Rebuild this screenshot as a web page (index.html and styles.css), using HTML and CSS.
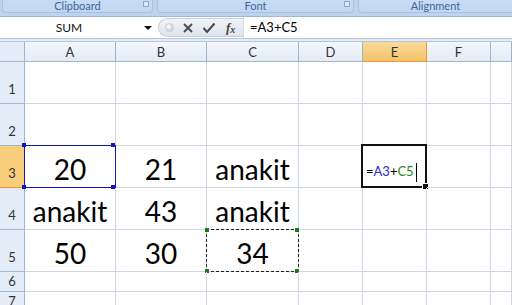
FILE: index.html
```html
<!DOCTYPE HTML>
<html lang="en">
<head>
<meta charset="UTF-8">
<title>Book1</title>
<link rel="stylesheet" href="styles.css">
</head>
<body>
  <div class="ribbon">
    <div class="group g1"><span class="glabel">Clipboard</span><span class="launch"></span></div>
    <div class="group g2"><span class="glabel">Font</span><span class="launch"></span></div>
    <div class="group g3"><span class="glabel">Alignment</span></div>
  </div>

  <div class="fbar">
    <div class="namebox"><span class="name">SUM</span><span class="drop"></span></div>
    <div class="fbtns">
      <span class="dot"></span>
      <svg class="ico" width="12" height="12" viewBox="0 0 12 12"><path d="M2 2 L10 10 M10 2 L2 10" stroke="#4a4a4a" stroke-width="1.8" fill="none"/></svg>
      <svg class="ico" width="14" height="12" viewBox="0 0 14 12"><path d="M1.5 6 L5 10 L12.5 1.5" stroke="#4a4a4a" stroke-width="2" fill="none"/></svg>
      <span class="fx">f<sub>x</sub></span>
    </div>
    <div class="finput">=A3+C5</div>
  </div>
  <div class="fsep"></div>

  <div class="sheet">
    <div class="hd corner"></div>
    <div class="hd col">A</div>
    <div class="hd col">B</div>
    <div class="hd col">C</div>
    <div class="hd col">D</div>
    <div class="hd col on">E</div>
    <div class="hd col">F</div>
    <div class="hd col"></div>

    <div class="hd row">1</div>
    <div class="c"></div><div class="c"></div><div class="c"></div><div class="c"></div><div class="c"></div><div class="c"></div><div class="c"></div>

    <div class="hd row">2</div>
    <div class="c"></div><div class="c"></div><div class="c"></div><div class="c"></div><div class="c"></div><div class="c"></div><div class="c"></div>

    <div class="hd row on">3</div>
    <div class="c ref">20</div><div class="c">21</div><div class="c">anakit</div><div class="c"></div>
    <div class="c edit"><span class="eq">=</span><span class="r1">A3</span><span class="eq">+</span><span class="r2">C5</span><span class="caret"></span></div>
    <div class="c"></div><div class="c"></div>

    <div class="hd row">4</div>
    <div class="c">anakit</div><div class="c">43</div><div class="c">anakit</div><div class="c"></div><div class="c"></div><div class="c"></div><div class="c"></div>

    <div class="hd row">5</div>
    <div class="c">50</div><div class="c">30</div><div class="c ants">34</div><div class="c"></div><div class="c"></div><div class="c"></div><div class="c"></div>

    <div class="hd row small">6</div>
    <div class="c"></div><div class="c"></div><div class="c"></div><div class="c"></div><div class="c"></div><div class="c"></div><div class="c"></div>

    <div class="hd row small">7</div>
    <div class="c"></div><div class="c"></div><div class="c"></div><div class="c"></div><div class="c"></div><div class="c"></div><div class="c"></div>
  </div>
</body>
</html>
```

FILE: styles.css
```css
* { margin: 0; padding: 0; box-sizing: border-box; }
html, body { width: 512px; height: 305px; overflow: hidden; background: #fff; }
body { font-family: Lato, "Liberation Sans", sans-serif; }

/* ribbon group captions */
.ribbon {
  display: flex;
  gap: 4px;
  height: 17px;
  padding: 0 0 0 2px;
  background: #bdd3ee;
  border-bottom: 1px solid #9fb8d9;
}
.group {
  position: relative;
  height: 13px;
  background: linear-gradient(#c7dbf3, #c2d7f1);
  border: 1px solid #a9c2e2;
  border-top: none;
  border-radius: 0 0 4px 4px;
  text-align: center;
}
.g1 { width: 151px; }
.g2 { width: 197px; }
.g3 { flex: 1; border-right: none; border-radius: 0 0 0 4px; }
.glabel {
  display: block;
  font-size: 11px;
  line-height: 11px;
  color: #3f65a0;
}
.launch {
  position: absolute;
  right: 3px;
  top: 1px;
  width: 6px;
  height: 6px;
  border: 1px solid #8fa7c8;
  background: #dce8f6;
}

/* formula bar */
.fbar {
  display: flex;
  height: 22px;
  background: #fff;
  border-bottom: 1px solid #b9c9df;
}
.namebox {
  position: relative;
  width: 158px;
  display: flex;
  align-items: center;
  justify-content: center;
  font-size: 12px;
  color: #111;
}
.name { margin-left: -20px; }
.drop {
  position: absolute;
  right: 6px;
  top: 9px;
  border-left: 4px solid transparent;
  border-right: 4px solid transparent;
  border-top: 4px solid #111;
}
.fbtns {
  width: 85px;
  margin: 1px 0;
  display: flex;
  align-items: center;
  gap: 8px;
  padding-left: 6px;
  border-radius: 10px 0 0 10px;
  border: 1px solid #c4cfdd;
  border-right: none;
  background: linear-gradient(#f0f3f8, #dde4ee);
}
.dot {
  width: 9px;
  height: 9px;
  border-radius: 50%;
  background: radial-gradient(circle at 35% 35%, #fff, #b9c1cc);
  border: 1px solid #c6ccd5;
}
.ico { display: block; }
.fx {
  font-family: "Liberation Serif", serif;
  font-style: italic;
  font-weight: bold;
  font-size: 13px;
  color: #444;
  margin-left: 2px;
}
.fx sub { font-size: 10px; vertical-align: -1px; }
.finput {
  flex: 1;
  padding-left: 6px;
  font-size: 13px;
  line-height: 21px;
  color: #000;
  border-left: 1px solid #d5dde8;
}
.fsep {
  height: 3px;
  background: #e3ebf5;
  border-bottom: 1px solid #b7c6db;
}

/* grid */
.sheet {
  display: grid;
  grid-template-columns: 25px 91px 91px 92px 64px 64px 64px 1fr;
  grid-template-rows: 20px 42px 42px 42px 42px 42px 20px 20px;
}
.hd {
  display: flex;
  align-items: center;
  justify-content: center;
  font-size: 13px;
  color: #333;
  background: linear-gradient(#f4f7fc, #e4ebf6);
  border-right: 1px solid #9eb6ce;
  border-bottom: 1px solid #9eb6ce;
}
.hd.col { padding-top: 1px; }
.hd.row {
  align-items: flex-end;
  padding-bottom: 6px;
  background: #e4ecf7;
  font-size: 13px;
}
.hd.row.small { padding-bottom: 2px; }
.hd.on { background: linear-gradient(#f9dc9c, #f2c267); border-color: #f29536; }
.hd.row.on { background: #f8cd7c; }
.corner { background: #e4ecf7; }

.c {
  position: relative;
  display: flex;
  align-items: flex-end;
  justify-content: center;
  padding-bottom: 4px;
  font-size: 28px;
  line-height: 28px;
  color: #000;
  border-right: 1px solid #d0d7e5;
  border-bottom: 1px solid #d0d7e5;
}

/* A3 reference outline */
.ref::before {
  content: "";
  position: absolute;
  top: -1px; left: -1px; right: -1px; bottom: -1px;
  border: 1px solid #1515c0;
}
.ref::after {
  content: "";
  position: absolute;
  top: -3px; left: -3px;
  width: 4px; height: 4px;
  background: #1515c0;
  box-shadow: 89px 0 #1515c0, 0 42px #1515c0, 89px 42px #1515c0;
}

/* C5 copy marquee */
.ants::before {
  content: "";
  position: absolute;
  top: -1px; left: -1px; right: -1px; bottom: -1px;
  border: 1px dashed #222;
}
.ants::after {
  content: "";
  position: absolute;
  top: -2px; left: -2px;
  width: 4px; height: 4px;
  background: #1c7a1c;
  box-shadow: 90px 0 #1c7a1c, 0 41px #1c7a1c, 90px 41px #1c7a1c;
}

/* E3 editing cell */
.edit {
  justify-content: flex-start;
  padding-left: 3px;
  padding-bottom: 8px;
  font-size: 13px;
  line-height: 16px;
}
.edit::before {
  content: "";
  position: absolute;
  top: -2px; left: -2px; right: -1px; bottom: -1px;
  border: 2px solid #111;
}
.edit::after {
  content: "";
  position: absolute;
  right: -3px; bottom: -3px;
  width: 5px; height: 5px;
  background: #111;
  border: 1px solid #fff;
}
.eq { color: #000; }
.r1 { color: #2a2ad0; }
.r2 { color: #1e8a1e; }
.caret {
  width: 1px;
  height: 19px;
  margin-left: 2px;
  margin-bottom: -3px;
  background: #000;
}
```
